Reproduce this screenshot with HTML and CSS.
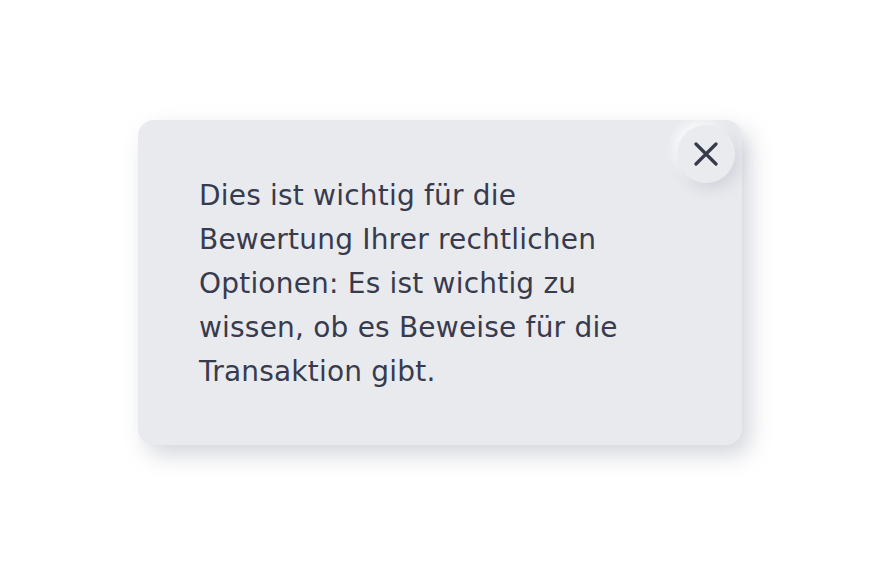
FILE: index.html
```html
<!DOCTYPE html>
<html lang="de">
<head>
<meta charset="utf-8">
<link rel="stylesheet" href="styles.css">
</head>
<body>
<div class="stage">
  <div class="card">
    <p class="text">Dies ist wichtig für die<br>Bewertung Ihrer rechtlichen<br>Optionen: Es ist wichtig zu<br>wissen, ob es Beweise für die<br>Transaktion gibt.</p>
    <button class="close" aria-label="Schließen">
      <svg width="24" height="24" viewBox="0 0 24 24"><path d="M2 2 L22 22 M22 2 L2 22" stroke="#363a4b" stroke-width="3.2" stroke-linecap="round" fill="none"/></svg>
    </button>
  </div>
</div>
</body>
</html>
```
FILE: styles.css
```css
html, body { margin: 0; padding: 0; background: #ffffff; }
.stage {
  width: 880px; height: 562px;
  display: flex; align-items: flex-start; justify-content: flex-start;
  padding: 120px 0 0 138px; box-sizing: border-box;
}
.card {
  position: relative;
  width: 604px; height: 325px; box-sizing: border-box;
  background: #e9eaee;
  border-radius: 16px;
  padding: 54px 40px 0 61px;
  box-shadow: 8px 10px 22px rgba(160,163,178,0.45), -10px -10px 24px rgba(255,255,255,0.9);
}
.text {
  margin: 0;
  font-family: "DejaVu Sans", "Open Sans", sans-serif;
  font-size: 28px; line-height: 44px; letter-spacing: 0.2px;
  color: #383b4d;
  white-space: nowrap;
}
.close {
  position: absolute; top: 5px; right: 7px;
  width: 58px; height: 58px; border-radius: 50%;
  border: none; padding: 0; background: #eaebef;
  display: flex; align-items: center; justify-content: center;
  box-shadow: 5px 6px 14px rgba(160,163,178,0.3), -4px -4px 10px rgba(255,255,255,0.8);
}
.close svg { display: block; }
```
